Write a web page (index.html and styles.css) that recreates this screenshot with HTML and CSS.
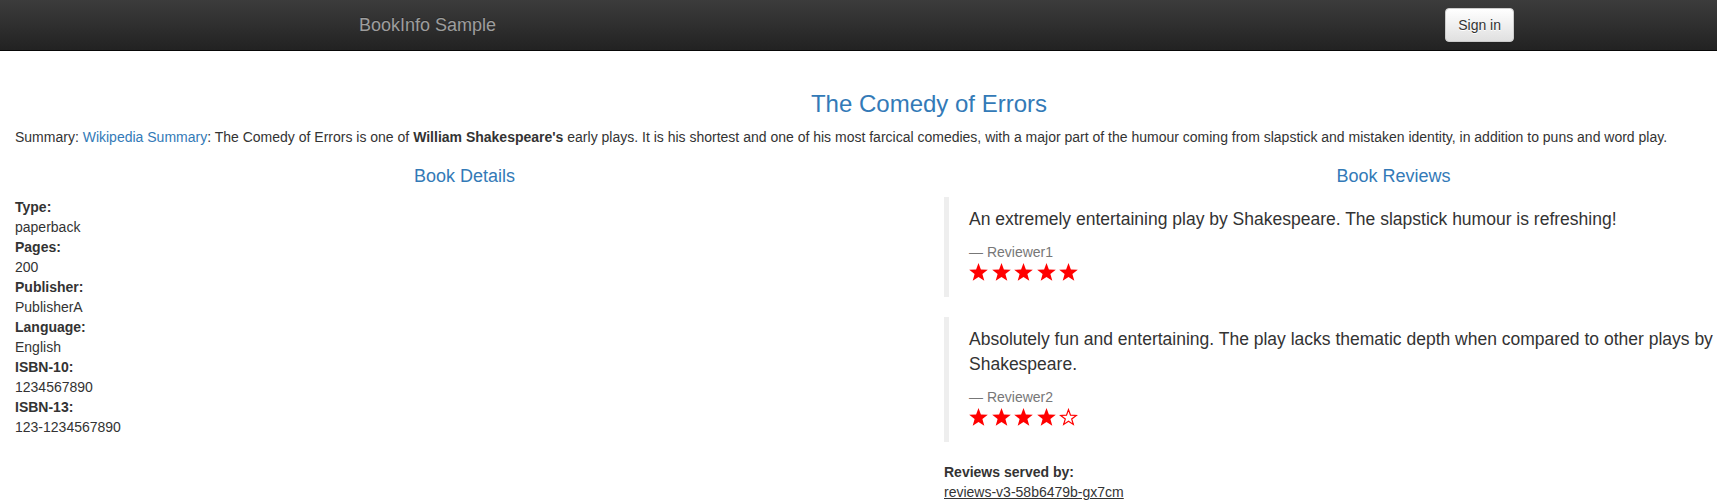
FILE: index.html
```html
<!DOCTYPE html>
<html>
<head>
<meta charset="utf-8">
<title>Simple Bookstore App</title>
<link rel="stylesheet" href="styles.css">
</head>
<body>
<div class="page">
  <nav class="navbar">
    <div class="nav-container">
      <a class="brand" href="#">BookInfo Sample</a>
      <button class="btn-signin" type="button">Sign in</button>
    </div>
  </nav>

  <div class="content">
    <h3 class="title">The Comedy of Errors</h3>
    <p class="summary">Summary: <a class="link" href="#">Wikipedia Summary</a>: The Comedy of Errors is one of <b>William Shakespeare's</b> early plays. It is his shortest and one of his most farcical comedies, with a major part of the humour coming from slapstick and mistaken identity, in addition to puns and word play.</p>

    <div class="row">
      <div class="col">
        <h4 class="section-title">Book Details</h4>
        <dl class="details">
          <dt>Type:</dt><dd>paperback</dd>
          <dt>Pages:</dt><dd>200</dd>
          <dt>Publisher:</dt><dd>PublisherA</dd>
          <dt>Language:</dt><dd>English</dd>
          <dt>ISBN-10:</dt><dd>1234567890</dd>
          <dt>ISBN-13:</dt><dd>123-1234567890</dd>
        </dl>
      </div>
      <div class="col">
        <h4 class="section-title">Book Reviews</h4>
        <blockquote class="review">
          <p>An extremely entertaining play by Shakespeare. The slapstick humour is refreshing!</p>
          <small class="reviewer">Reviewer1</small>
          <div class="stars">
            <svg class="star" viewBox="0 0 19 18"><polygon points="9.5,0 11.9,6.5 18.8,6.8 13.4,11.1 15.3,17.8 9.5,13.9 3.7,17.8 5.6,11.1 0.2,6.8 7.1,6.5"/></svg>
            <svg class="star" viewBox="0 0 19 18"><polygon points="9.5,0 11.9,6.5 18.8,6.8 13.4,11.1 15.3,17.8 9.5,13.9 3.7,17.8 5.6,11.1 0.2,6.8 7.1,6.5"/></svg>
            <svg class="star" viewBox="0 0 19 18"><polygon points="9.5,0 11.9,6.5 18.8,6.8 13.4,11.1 15.3,17.8 9.5,13.9 3.7,17.8 5.6,11.1 0.2,6.8 7.1,6.5"/></svg>
            <svg class="star" viewBox="0 0 19 18"><polygon points="9.5,0 11.9,6.5 18.8,6.8 13.4,11.1 15.3,17.8 9.5,13.9 3.7,17.8 5.6,11.1 0.2,6.8 7.1,6.5"/></svg>
            <svg class="star" viewBox="0 0 19 18"><polygon points="9.5,0 11.9,6.5 18.8,6.8 13.4,11.1 15.3,17.8 9.5,13.9 3.7,17.8 5.6,11.1 0.2,6.8 7.1,6.5"/></svg>
          </div>
        </blockquote>
        <blockquote class="review">
          <p>Absolutely fun and entertaining. The play lacks thematic depth when compared to other plays by Shakespeare.</p>
          <small class="reviewer">Reviewer2</small>
          <div class="stars">
            <svg class="star" viewBox="0 0 19 18"><polygon points="9.5,0 11.9,6.5 18.8,6.8 13.4,11.1 15.3,17.8 9.5,13.9 3.7,17.8 5.6,11.1 0.2,6.8 7.1,6.5"/></svg>
            <svg class="star" viewBox="0 0 19 18"><polygon points="9.5,0 11.9,6.5 18.8,6.8 13.4,11.1 15.3,17.8 9.5,13.9 3.7,17.8 5.6,11.1 0.2,6.8 7.1,6.5"/></svg>
            <svg class="star" viewBox="0 0 19 18"><polygon points="9.5,0 11.9,6.5 18.8,6.8 13.4,11.1 15.3,17.8 9.5,13.9 3.7,17.8 5.6,11.1 0.2,6.8 7.1,6.5"/></svg>
            <svg class="star" viewBox="0 0 19 18"><polygon points="9.5,0 11.9,6.5 18.8,6.8 13.4,11.1 15.3,17.8 9.5,13.9 3.7,17.8 5.6,11.1 0.2,6.8 7.1,6.5"/></svg>
            <svg class="star star-empty" viewBox="0 0 19 18"><polygon points="9.5,1.6 11.5,7.1 17.3,7.4 12.7,10.9 14.3,16.4 9.5,13.2 4.7,16.4 6.3,10.9 1.7,7.4 7.5,7.1"/></svg>
          </div>
        </blockquote>
        <dl class="served">
          <dt>Reviews served by:</dt>
          <u>reviews-v3-58b6479b-gx7cm</u>
        </dl>
      </div>
    </div>
  </div>
</div>
</body>
</html>
```

FILE: styles.css
```css
html {
  overflow: hidden;
}

body {
  margin: 0;
  font-family: "Liberation Sans", Arial, Helvetica, sans-serif;
  font-size: 14px;
  line-height: 20px;
  color: #333;
  background: #fff;
}

.page {
  width: 1858px;
}

.navbar {
  height: 50px;
  border-bottom: 1px solid #080808;
  background-image: linear-gradient(to bottom, #3c3c3c 0, #222 100%);
  margin-bottom: 20px;
}

.nav-container {
  width: 1170px;
  margin: 0 auto;
  height: 50px;
  display: flex;
  justify-content: space-between;
  align-items: flex-start;
}

.brand {
  display: block;
  padding: 15px 15px;
  font-size: 18px;
  line-height: 20px;
  color: #9d9d9d;
  text-decoration: none;
  text-shadow: 0 -1px 0 rgba(0, 0, 0, .25);
}

.btn-signin {
  margin-top: 8px;
  height: 34px;
  padding: 6px 12px;
  font-family: "Liberation Sans", Arial, Helvetica, sans-serif;
  font-size: 14px;
  line-height: 20px;
  color: #333;
  border: 1px solid #ccc;
  border-radius: 4px;
  background-image: linear-gradient(to bottom, #fff 0, #e0e0e0 100%);
  text-shadow: 0 1px 0 #fff;
  box-shadow: inset 0 1px 0 rgba(255, 255, 255, .15), 0 1px 1px rgba(0, 0, 0, .075);
}

.content {
  display: flow-root;
  padding: 0 15px;
}

.title {
  margin: 20px 0 10px;
  font-size: 24px;
  font-weight: 500;
  line-height: 26.4px;
  text-align: center;
  color: #337ab7;
}

.summary {
  margin: 0 0 10px;
}

.link {
  color: #337ab7;
  text-decoration: none;
}

.row {
  display: grid;
  grid-template-columns: 1fr 1fr;
  margin: 0 -15px;
}

.col {
  padding: 0 15px;
  min-width: 0;
}

.section-title {
  margin: 10px 0;
  font-size: 18px;
  font-weight: 500;
  line-height: 19.8px;
  text-align: center;
  color: #337ab7;
}

.details {
  margin: 0 0 20px;
}

.details dt,
.served dt {
  font-weight: bold;
}

.details dd {
  margin: 0;
}

.review {
  margin: 0 0 20px;
  padding: 10px 20px;
  font-size: 17.5px;
  line-height: 25px;
  border-left: 5px solid #eee;
}

.review p {
  margin: 0 0 10px;
}

.reviewer {
  display: block;
  font-size: 14px;
  line-height: 20px;
  color: #777;
}

.reviewer::before {
  content: "\2014 \00A0";
}

.stars {
  display: flex;
  gap: 3.5px;
  height: 25px;
  padding-top: 1px;
  box-sizing: border-box;
  align-items: flex-start;
}

.star {
  width: 19px;
  height: 18px;
  fill: #f00;
}

.star-empty {
  fill: none;
  stroke: #f00;
  stroke-width: 1.2;
}

.served {
  margin: 0 0 20px;
}
```
